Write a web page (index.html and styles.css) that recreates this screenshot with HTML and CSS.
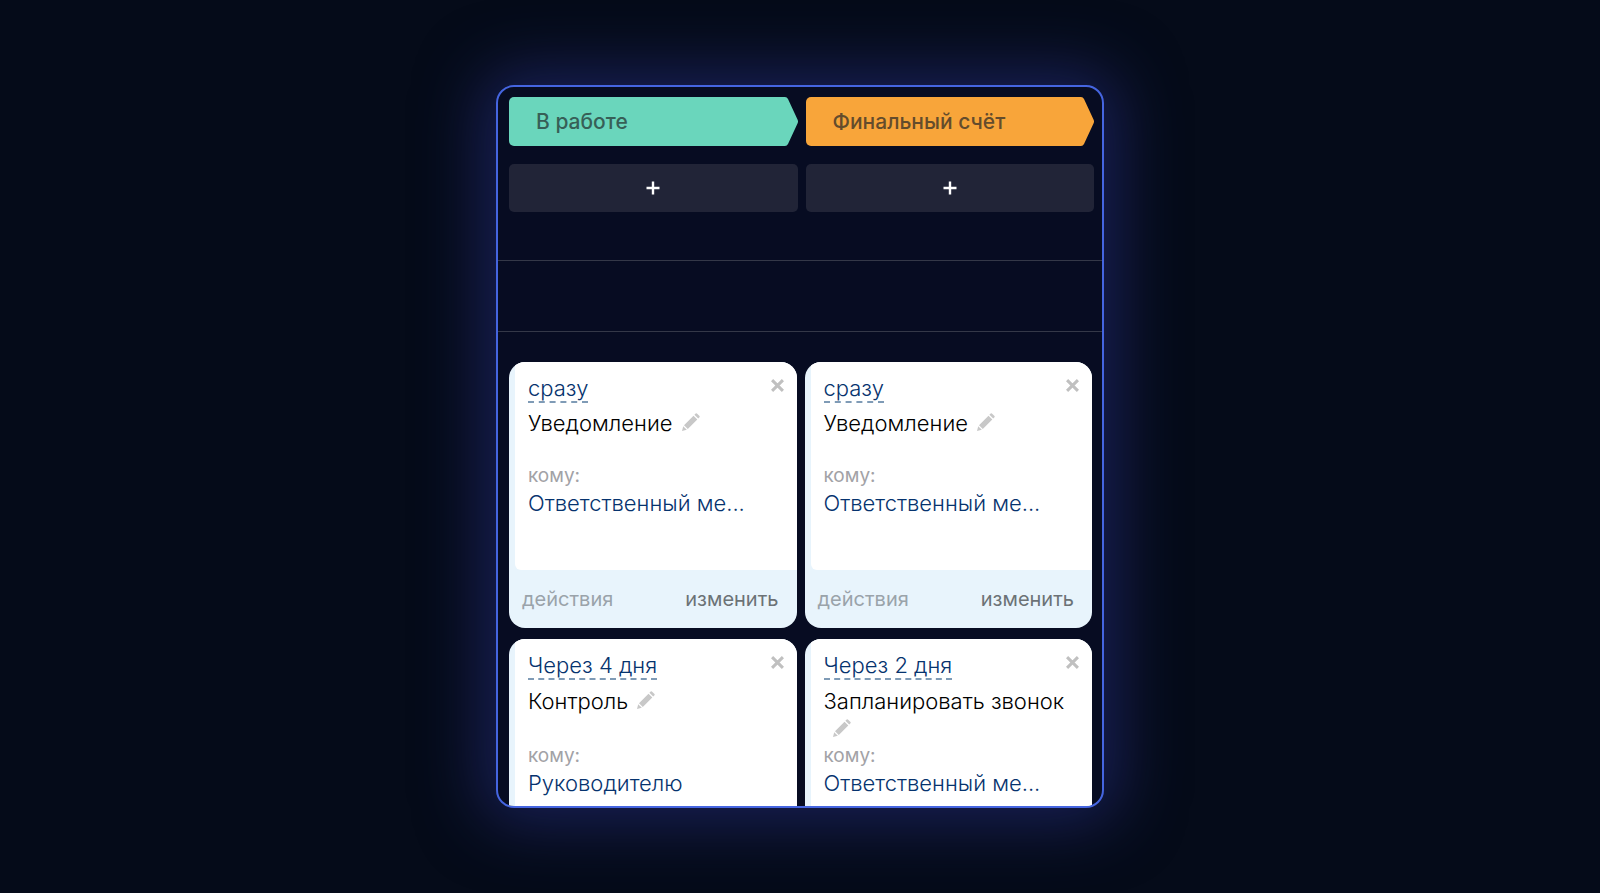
FILE: index.html
```html
<!DOCTYPE html>
<html lang="ru">

<head>
    <meta charset="UTF-8">
    <meta name="viewport" content="width=device-width, initial-scale=1.0">
    <title>Роботы</title>
    <link rel="stylesheet" href="styles.css">
</head>

<body>
    <!-- общие иконки -->
    <svg class="sprite" aria-hidden="true">
        <symbol id="close" viewBox="0 0 12 12">
            <path d="M1 1L11 11M11 1L1 11" stroke="currentColor" stroke-width="2.8" />
        </symbol>
        <symbol id="pencil" viewBox="0 0 18 18">
            <path d="M0 18L1.2 13.2L4.8 16.8ZM2 12.2L11.5 2.7L15.3 6.5L5.8 16ZM12.4 1.8L13.7 0.5Q14.3 0 14.9 0.5L17.5 3.1Q18 3.7 17.5 4.3L16.2 5.6Z" fill="currentColor" />
        </symbol>
        <symbol id="plus" viewBox="0 0 14 14">
            <path d="M7 0.5V13.5M0.5 7H13.5" stroke="currentColor" stroke-width="2.4" />
        </symbol>
        <symbol id="tip" viewBox="0 0 16 49">
            <path d="M0 0H3Q5 0 6 2L15.5 22.5Q16.5 24.5 15.5 26.5L6 47Q5 49 3 49H0Z" fill="currentColor" />
        </symbol>
    </svg>

    <main class="board">
        <div class="stages">
            <div class="stage">
                <div class="stage-head green">
                    <h2>В работе</h2>
                    <svg class="tip"><use href="#tip" /></svg>
                </div>
                <button class="add" aria-label="Добавить"><svg><use href="#plus" /></svg></button>
            </div>
            <div class="stage">
                <div class="stage-head orange">
                    <h2>Финальный счёт</h2>
                    <svg class="tip"><use href="#tip" /></svg>
                </div>
                <button class="add" aria-label="Добавить"><svg><use href="#plus" /></svg></button>
            </div>
        </div>

        <div class="divider"></div>

        <div class="cards">
            <article class="card">
                <div class="card-body">
                    <button class="close" aria-label="Удалить"><svg><use href="#close" /></svg></button>
                    <a href="#" class="time">сразу</a>
                    <h3>Уведомление<button class="edit" aria-label="Переименовать"><svg><use href="#pencil" /></svg></button></h3>
                    <p class="label">кому:</p>
                    <a href="#" class="person">Ответственный ме...</a>
                </div>
                <div class="card-footer">
                    <button class="actions">действия</button>
                    <button class="change">изменить</button>
                </div>
            </article>

            <article class="card">
                <div class="card-body">
                    <button class="close" aria-label="Удалить"><svg><use href="#close" /></svg></button>
                    <a href="#" class="time">сразу</a>
                    <h3>Уведомление<button class="edit" aria-label="Переименовать"><svg><use href="#pencil" /></svg></button></h3>
                    <p class="label">кому:</p>
                    <a href="#" class="person">Ответственный ме...</a>
                </div>
                <div class="card-footer">
                    <button class="actions">действия</button>
                    <button class="change">изменить</button>
                </div>
            </article>

            <article class="card two-line">
                <div class="card-body">
                    <button class="close" aria-label="Удалить"><svg><use href="#close" /></svg></button>
                    <a href="#" class="time">Через 4 дня</a>
                    <h3>Контроль<button class="edit" aria-label="Переименовать"><svg><use href="#pencil" /></svg></button></h3>
                    <p class="label">кому:</p>
                    <a href="#" class="person">Руководителю</a>
                </div>
            </article>

            <article class="card two-line">
                <div class="card-body">
                    <button class="close" aria-label="Удалить"><svg><use href="#close" /></svg></button>
                    <a href="#" class="time">Через 2 дня</a>
                    <h3>Запланировать звонок<button class="edit" aria-label="Переименовать"><svg><use href="#pencil" /></svg></button></h3>
                    <p class="label">кому:</p>
                    <a href="#" class="person">Ответственный ме...</a>
                </div>
            </article>
        </div>
    </main>
</body>

</html>
```

FILE: styles.css
```css
* {
    box-sizing: border-box;
}

body {
    margin: 0;
    min-height: 100vh;
    display: flex;
    align-items: center;
    justify-content: center;
    background-color: #050b19;
    font-family: Inter, sans-serif;
    font-size: 22px;
    line-height: 28px;
}

h2,
h3,
p {
    margin: 0;
}

a {
    text-decoration: none;
}

button {
    border: none;
    padding: 0;
    background: none;
    font: inherit;
    cursor: pointer;
}

.sprite {
    display: none;
}

.board {
    width: 38%;
    min-width: 600px;
    height: 81vh;
    overflow: hidden;
    border: 2px solid #4565e0;
    border-radius: 18px;
    background-color: #070c22;
    box-shadow: 0 0 64px 14px rgba(46, 54, 150, 0.5);
}

/* стадии */
.stages {
    display: grid;
    grid-template-columns: 1fr 1fr;
    gap: 8px;
    padding: 10px 8px 48px 11px;
}

.stage-head {
    display: flex;
    height: 49px;
    margin-bottom: 18px;
}

.stage-head h2 {
    flex: 1;
    padding-left: 27px;
    font-size: 21px;
    line-height: 49px;
    font-weight: 500;
    border-radius: 5px 0 0 5px;
}

.stage-head .tip {
    width: 16px;
    height: 49px;
}

.green {
    color: #6ad6bc;
}

.green h2 {
    background-color: #6ad6bc;
    color: #375f57;
}

.orange {
    color: #f8a53a;
}

.orange h2 {
    background-color: #f8a53a;
    color: #644c2c;
}

.add {
    display: flex;
    align-items: center;
    justify-content: center;
    width: 100%;
    height: 48px;
    border-radius: 5px;
    background-color: #212437;
    color: #fff;
}

.add svg {
    width: 14px;
    height: 14px;
}

.divider {
    height: 72px;
    border-top: 1px solid #343848;
    border-bottom: 1px solid #343848;
}

/* карточки */
.cards {
    display: grid;
    grid-template-columns: 1fr 1fr;
    gap: 11px 8px;
    padding: 30px 10px 0 11px;
}

.card {
    height: 266px;
    padding-left: 6px;
    overflow: hidden;
    border-radius: 16px;
    background-color: #e8f4fc;
}

.card-body {
    position: relative;
    height: 208px;
    padding: 12px 12px 0 13px;
    border-bottom-left-radius: 6px;
    background-color: #fff;
}

.time {
    display: inline-block;
    height: 29px;
    border-bottom: 2px dashed #7f9bb6;
    font-weight: 300;
    color: #06336e;
}

.card h3 {
    min-height: 54px;
    margin-top: 6px;
    font-size: 22px;
    font-weight: 300;
    color: #000;
}

.card.two-line h3 {
    min-height: 56px;
    margin-top: 7px;
}

.edit {
    margin-left: 9px;
    color: #c8c8c8;
}

.edit svg {
    display: block;
    width: 18px;
    height: 18px;
}

.label {
    font-size: 19px;
    line-height: 26px;
    color: #a2a2a6;
}

.person {
    font-weight: 300;
    color: #06336e;
}

.close {
    position: absolute;
    top: 17px;
    right: 13px;
    color: #c0c0c0;
}

.close svg {
    display: block;
    width: 13px;
    height: 13px;
}

.card-footer {
    display: flex;
    justify-content: space-between;
    align-items: center;
    height: 58px;
    padding: 0 18px 0 7px;
    font-size: 20px;
}

.actions {
    color: #9aa3aa;
}

.change {
    color: #6c7276;
}
```
